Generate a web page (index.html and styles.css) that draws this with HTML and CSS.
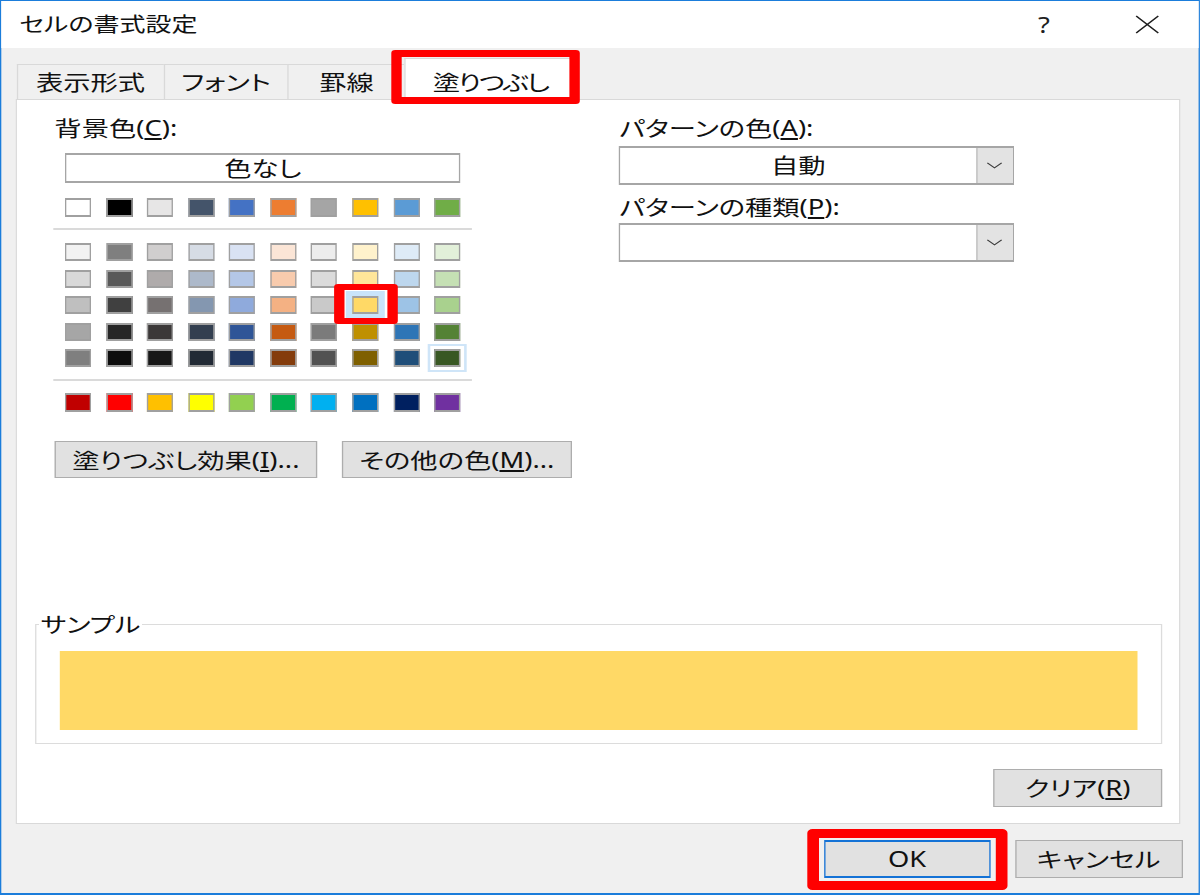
FILE: index.html
```html
<!DOCTYPE html>
<html lang="ja">
<head>
<meta charset="utf-8">
<title>セルの書式設定</title>
<link rel="stylesheet" href="styles.css">
</head>
<body>
<div class="stage">
  <div class="window">
    <header class="titlebar">
      <span class="title">セルの書式設定</span>
      <span class="tb-help">?</span>
      <span class="tb-close"><svg width="19" height="19" viewBox="0 0 19 19"><path d="M1 1L18 18M18 1L1 18" stroke="#1f1f1f" stroke-width="1.2" fill="none"/></svg></span>
    </header>
    <div class="body">
      <div class="tabs">
        <div class="tab t1">表示形式</div>
        <div class="tab t2">フォント</div>
        <div class="tab t3">罫線</div>
        <div class="tab t4 sel mark">塗りつぶし</div>
      </div>
      <div class="panel">
        <div class="cols">
          <div class="col-left">
            <div class="label">背景色(<u>C</u>):</div>
            <div class="palette">
              <div class="nocolor">色なし</div>
              <div class="sw-row theme">
                <div class="sw" style="background:#FFFFFF"></div>
                <div class="sw" style="background:#000000"></div>
                <div class="sw" style="background:#E7E6E6"></div>
                <div class="sw" style="background:#44546A"></div>
                <div class="sw" style="background:#4472C4"></div>
                <div class="sw" style="background:#ED7D31"></div>
                <div class="sw" style="background:#A5A5A5"></div>
                <div class="sw" style="background:#FFC000"></div>
                <div class="sw" style="background:#5B9BD5"></div>
                <div class="sw" style="background:#70AD47"></div>
              </div>
              <div class="sep"></div>
              <div class="sw-row tints">
                <div class="sw" style="background:#F2F2F2"></div>
                <div class="sw" style="background:#7F7F7F"></div>
                <div class="sw" style="background:#D0CECE"></div>
                <div class="sw" style="background:#D6DCE5"></div>
                <div class="sw" style="background:#D9E2F3"></div>
                <div class="sw" style="background:#FBE5D6"></div>
                <div class="sw" style="background:#EDEDED"></div>
                <div class="sw" style="background:#FFF2CC"></div>
                <div class="sw" style="background:#DEEBF7"></div>
                <div class="sw" style="background:#E2F0D9"></div>

                <div class="sw" style="background:#D9D9D9"></div>
                <div class="sw" style="background:#595959"></div>
                <div class="sw" style="background:#AFABAB"></div>
                <div class="sw" style="background:#ADB9CA"></div>
                <div class="sw" style="background:#B4C7E7"></div>
                <div class="sw" style="background:#F8CBAD"></div>
                <div class="sw" style="background:#DBDBDB"></div>
                <div class="sw" style="background:#FFE699"></div>
                <div class="sw" style="background:#BDD7EE"></div>
                <div class="sw" style="background:#C5E0B4"></div>

                <div class="sw" style="background:#BFBFBF"></div>
                <div class="sw" style="background:#404040"></div>
                <div class="sw" style="background:#767171"></div>
                <div class="sw" style="background:#8497B0"></div>
                <div class="sw" style="background:#8FAADC"></div>
                <div class="sw" style="background:#F4B183"></div>
                <div class="sw" style="background:#C9C9C9"></div>
                <div class="sw sel mark" style="background:#FFD966"></div>
                <div class="sw" style="background:#9DC3E6"></div>
                <div class="sw" style="background:#A9D18E"></div>

                <div class="sw" style="background:#A6A6A6"></div>
                <div class="sw" style="background:#262626"></div>
                <div class="sw" style="background:#3B3838"></div>
                <div class="sw" style="background:#333F50"></div>
                <div class="sw" style="background:#2F5597"></div>
                <div class="sw" style="background:#C55A11"></div>
                <div class="sw" style="background:#7B7B7B"></div>
                <div class="sw" style="background:#BF9000"></div>
                <div class="sw" style="background:#2E75B6"></div>
                <div class="sw" style="background:#548235"></div>

                <div class="sw" style="background:#7F7F7F"></div>
                <div class="sw" style="background:#0D0D0D"></div>
                <div class="sw" style="background:#171717"></div>
                <div class="sw" style="background:#222A35"></div>
                <div class="sw" style="background:#203864"></div>
                <div class="sw" style="background:#843C0C"></div>
                <div class="sw" style="background:#525252"></div>
                <div class="sw" style="background:#7F6000"></div>
                <div class="sw" style="background:#1F4E79"></div>
                <div class="sw focus" style="background:#385723"></div>
              </div>
              <div class="sep sep2"></div>
              <div class="sw-row std">
                <div class="sw" style="background:#C00000"></div>
                <div class="sw" style="background:#FF0000"></div>
                <div class="sw" style="background:#FFC000"></div>
                <div class="sw" style="background:#FFFF00"></div>
                <div class="sw" style="background:#92D050"></div>
                <div class="sw" style="background:#00B050"></div>
                <div class="sw" style="background:#00B0F0"></div>
                <div class="sw" style="background:#0070C0"></div>
                <div class="sw" style="background:#002060"></div>
                <div class="sw" style="background:#7030A0"></div>
              </div>
            </div>
            <div class="btn-row">
              <div class="btn fx">塗りつぶし効果(<u>I</u>)...</div>
              <div class="btn more">その他の色(<u>M</u>)...</div>
            </div>
          </div>
          <div class="col-right">
            <div class="label">パターンの色(<u>A</u>):</div>
            <div class="combo">
              <span class="combo-val">自動</span>
              <span class="combo-btn"><svg width="12" height="7" viewBox="0 0 12 7"><path d="M0.5 0.8L6 5.8L11.5 0.8" stroke="#3a3a3a" stroke-width="1" fill="none"/></svg></span>
            </div>
            <div class="label l2">パターンの種類(<u>P</u>):</div>
            <div class="combo c2">
              <span class="combo-val"></span>
              <span class="combo-btn"><svg width="12" height="7" viewBox="0 0 12 7"><path d="M0.5 0.8L6 5.8L11.5 0.8" stroke="#3a3a3a" stroke-width="1" fill="none"/></svg></span>
            </div>
          </div>
        </div>
        <fieldset class="sample">
          <legend>サンプル</legend>
          <div class="sample-fill"></div>
        </fieldset>
        <div class="clear-row">
          <div class="btn clear">クリア(<u>R</u>)</div>
        </div>
      </div>
      <div class="footer">
        <div class="btn ok mark">OK</div>
        <div class="btn cancel">キャンセル</div>
      </div>
    </div>
  </div>
</div>
</body>
</html>
```
FILE: styles.css
```css
html, body {
  margin: 0;
  padding: 0;
  background: #fff;
  overflow: hidden;
}

/* The reference dialog is stretched horizontally by ~1.3x */
.stage {
  width: 923.08px;
  height: 895px;
  transform: scaleX(1.3);
  transform-origin: 0 0;
  font-family: "Noto Sans", "Noto Sans CJK JP", sans-serif;
  font-size: 21px;
  font-feature-settings: "palt";
  color: #111;
}

.window {
  box-sizing: border-box;
  height: 895px;
  border-style: solid;
  border-color: #1b7ddb;
  border-width: 1px 1.5px 2px 1.5px;
  display: flex;
  flex-direction: column;
  background: #f0f0f0;
}

.titlebar {
  height: 47px;
  flex: none;
  background: #fff;
  display: flex;
  align-items: center;
  padding-left: 13.9px;
}
.title {
  flex: 1;
  font-size: 20px;
  line-height: 28px;
}
.tb-help {
  width: 78px;
  text-align: center;
  font-size: 21px;
  line-height: 28px;
  color: #1f1f1f;
}
.tb-close {
  width: 80px;
  display: flex;
  justify-content: center;
  align-items: center;
}

.body {
  flex: 1;
  display: flex;
  flex-direction: column;
  padding: 16px 13.9px 0 10.8px;
}

/* Tabs */
.tabs {
  height: 35px;
  flex: none;
  display: flex;
  align-items: flex-end;
  padding-left: 0.8px;
}
.tab {
  box-sizing: border-box;
  height: 35px;
  border: 1px solid #d9d9d9;
  border-bottom: none;
  border-right: none;
  display: flex;
  align-items: center;
  justify-content: center;
  line-height: 28px;
}
.t1 { width: 113.1px; }
.t2 { width: 95.4px; }
.t3 { width: 90px; }
.t4 {
  width: 132.3px;
  height: 42px;
  margin-bottom: -1px;
  padding-top: 4px;
  letter-spacing: -1.5px;
  background: #fff;
  border-right: 1px solid #d9d9d9;
  position: relative;
  z-index: 2;
}

/* red annotation frames */
.mark::after {
  content: "";
  position: absolute;
  border-style: solid;
  border-color: #ff0000;
  border-radius: 3px;
  pointer-events: none;
}
.t4::after {
  left: -11px;
  right: -4px;
  top: -9px;
  bottom: -4px;
  border-width: 7px 8px;
}

/* Panel */
.panel {
  box-sizing: border-box;
  height: 725px;
  flex: none;
  background: #fff;
  border: 1px solid #d9d9d9;
  display: flex;
  flex-direction: column;
  padding-bottom: 16px;
  position: relative;
}
.cols {
  display: flex;
}
.col-left {
  flex: 0 0 463.6px;
  box-sizing: border-box;
  padding: 14px 0 0 29px;
}
.col-right {
  flex: 0 0 303.8px;
  padding-top: 14px;
}
.label {
  line-height: 28px;
  white-space: nowrap;
}
.l2 { margin-top: 8px; }

.palette {
  margin-left: 8.5px;
  width: 303.8px;
}
.nocolor {
  box-sizing: border-box;
  height: 30px;
  margin-top: 11px;
  border: solid #a6a6a6;
  border-width: 2px 1.6px;
  text-align: center;
  line-height: 26px;
}
.sw-row {
  display: grid;
  grid-template-columns: repeat(10, 20px);
  column-gap: 11.54px;
}
.theme { margin-top: 15px; }
.tints { margin-top: 13px; row-gap: 8.5px; }
.std { margin-top: 12px; }
.sw {
  box-sizing: border-box;
  height: 19px;
  border: solid #a0a0a0;
  border-width: 2px 1.7px;
}
.tints .sw { height: 18px; }
.sw.sel {
  position: relative;
  box-shadow: 0 0 0 5px #c9e4fa;
}
.sw.sel::after {
  left: -15.4px;
  right: -15.5px;
  top: -14px;
  bottom: -12px;
  border-width: 6px 8.5px;
}
.sw.focus {
  box-shadow: 0 0 0 3px #fff, 0 0 0 5px #cfe5f8;
}
.sep {
  height: 2px;
  background: #dadada;
  margin: 11px -9.3px 0;
}
.sep2 { margin-top: 12px; }

/* Buttons */
.btn {
  box-sizing: border-box;
  height: 37px;
  background: #e1e1e1;
  border: solid #adadad;
  border-width: 1.5px 1.2px;
  display: flex;
  align-items: center;
  justify-content: center;
  white-space: nowrap;
  line-height: 28px;
}
.btn-row {
  display: flex;
  gap: 18.5px;
  margin-top: 29px;
}
.fx { width: 202.3px; }
.more { width: 177.7px; }

/* Combos */
.combo {
  box-sizing: border-box;
  height: 39px;
  margin-top: 4px;
  border: solid #a6a6a6;
  border-width: 2px 1.6px;
  display: flex;
  background: #fff;
}
.c2 { margin-top: 2px; }
.combo-val {
  flex: 1;
  text-align: center;
  line-height: 35px;
}
.combo-btn {
  width: 28.4px;
  box-sizing: border-box;
  background: #e3e3e3;
  border-left: 1px solid #bdbdbd;
  display: flex;
  align-items: center;
  justify-content: center;
}

/* Sample */
.sample {
  margin: auto 12.9px 0 14.4px;
  border: 1px solid #dcdcdc;
  padding: 13px 0;
  min-width: 0;
}
.sample legend {
  padding: 0 1px;
  margin-left: 2px;
  line-height: 28px;
  font-size: 21px;
}
.sample-fill {
  height: 79px;
  margin: 0 18.2px;
  background: #ffd966;
}

.clear-row {
  display: flex;
  justify-content: flex-end;
  margin-top: 25px;
  padding-right: 13.6px;
}
.clear {
  width: 129.2px;
  height: 38px;
}

/* Footer */
.footer {
  box-sizing: border-box;
  height: 69px;
  flex: none;
  display: flex;
  justify-content: flex-end;
  gap: 18.5px;
  padding-top: 16px;
  margin-right: -1.5px;
}
.ok {
  width: 128.5px;
  height: 38px;
  border-color: #1472d6;
  border-width: 2px 1.6px;
  position: relative;
}
.ok::after {
  left: -13.9px;
  right: -13.9px;
  top: -13px;
  bottom: -14px;
  border-width: 9px 9px;
  border-radius: 4px;
}
.cancel {
  width: 129.2px;
  height: 38px;
}
```
